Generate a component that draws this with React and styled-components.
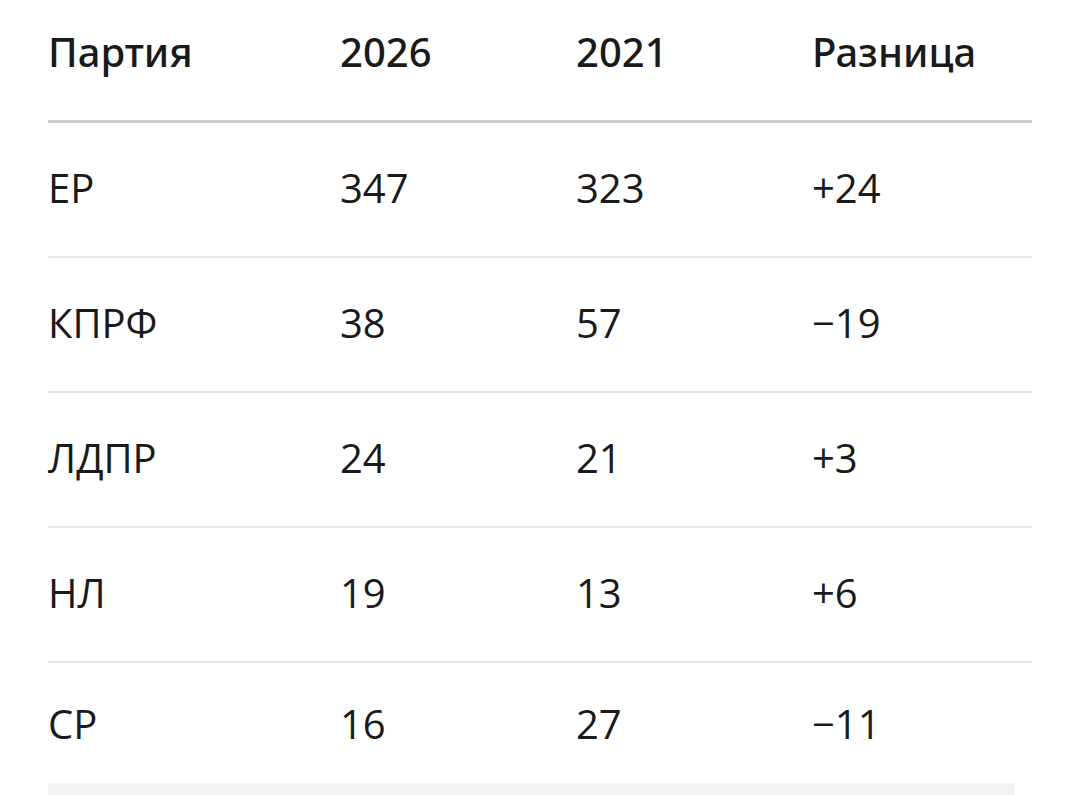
import styled, { createGlobalStyle } from "styled-components";

const rows = [
  { party: "ЕР", now: "347", prev: "323", diff: "+24" },
  { party: "КПРФ", now: "38", prev: "57", diff: "−19" },
  { party: "ЛДПР", now: "24", prev: "21", diff: "+3" },
  { party: "НЛ", now: "19", prev: "13", diff: "+6" },
  { party: "СР", now: "16", prev: "27", diff: "−11" },
];

const GlobalStyle = createGlobalStyle`
  html, body {
    margin: 0;
    padding: 0;
    background: #fff;
  }
  body {
    font-family: "Open Sans", "Noto Sans", sans-serif;
    color: #1a1a1a;
  }
`;

const Page = styled.div`
  padding: 0 48px;
  height: 795px;
  overflow: hidden;
`;

const Table = styled.div`
  width: 984px;
`;

const Row = styled.div`
  display: grid;
  grid-template-columns: 292px 236px 236px 1fr;
  align-items: center;
  height: 135px;
  padding-bottom: 4px;
  box-sizing: border-box;
  border-bottom: 2px solid #e6e6e6;

  &:last-child {
    border-bottom: none;
    height: 120px;
    padding-top: 6px;
  }
`;

const HeadRow = styled(Row)`
  height: 123px;
  padding-bottom: 16px;
  border-bottom: 3px solid #cccccc;
`;

const Cell = styled.div`
  font-size: 40px;
  line-height: 1;
  font-weight: 400;
  color: #1a1a1a;
`;

const HeadCell = styled(Cell)`
  font-family: "Noto Sans", "Open Sans", sans-serif;
  font-weight: 500;
`;

const Footer = styled.div`
  width: 967px;
  height: 20px;
  background: #f2f2f2;
`;

export default function App() {
  return (
    <>
      <GlobalStyle />
      <Page>
        <Table>
          <HeadRow>
            <HeadCell>Партия</HeadCell>
            <HeadCell>2026</HeadCell>
            <HeadCell>2021</HeadCell>
            <HeadCell>Разница</HeadCell>
          </HeadRow>
          {rows.map((r) => (
            <Row key={r.party}>
              <Cell>{r.party}</Cell>
              <Cell>{r.now}</Cell>
              <Cell>{r.prev}</Cell>
              <Cell>{r.diff}</Cell>
            </Row>
          ))}
        </Table>
        <Footer />
      </Page>
    </>
  );
}
